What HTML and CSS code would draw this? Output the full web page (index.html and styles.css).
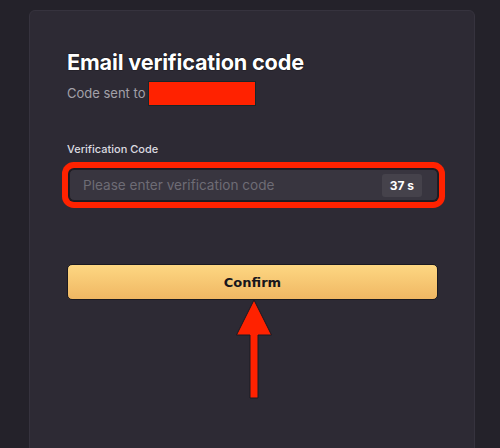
FILE: index.html
```html
<!DOCTYPE html>
<html>
<head>
<meta charset="utf-8">
<link rel="stylesheet" href="styles.css">
</head>
<body>
<div class="card">
  <h1 class="title">Email verification code</h1>
  <div class="sent">Code sent to <span class="redact"></span></div>
  <div class="label">Verification Code</div>
  <div class="field">
    <span class="placeholder">Please enter verification code</span>
    <span class="timer">37 s</span>
  </div>
  <button class="confirm">Confirm</button>
  <svg class="arrow" width="40" height="104" viewBox="0 0 40 104">
    <polygon points="18,0 0.5,35 14,35 14,98 22,98 22,35 35.5,35" fill="#ff2200" stroke="#1b1a22" stroke-width="1"/>
  </svg>
</div>
</body>
</html>
```
FILE: styles.css
```css
html, body { margin: 0; padding: 0; }
body {
  background: #24222a;
  width: 500px;
  height: 448px;
  overflow: hidden;
  font-family: Inter, "Liberation Sans", sans-serif;
}
.card {
  position: relative;
  box-sizing: border-box;
  margin: 10px 0 0 29px;
  width: 446px;
  height: 450px;
  background: #2d2a34;
  border: 1px solid #36333e;
  border-radius: 6px 6px 0 0;
  padding: 37px 37px 0 37px;
}
.title {
  margin: 0;
  font-size: 21.7px;
  font-weight: 700;
  color: #ffffff;
  line-height: 28px;
  letter-spacing: -0.2px;
  text-shadow: 0 0 1px #000, 0 0 1px #000;
}
.sent {
  margin-top: 5px;
  display: flex;
  align-items: center;
  font-size: 13px;
  color: #a3a1a9;
  height: 24px;
}
.redact {
  display: inline-block;
  width: 106px;
  height: 23px;
  margin-left: 4px;
  background: #ff2200;
  box-shadow: 0 0 0 1px #16262a;
}
.label {
  margin-top: 37px;
  font-size: 11px;
  font-weight: 500;
  color: #dcdbe0;
  line-height: 14px;
}
.field {
  margin: 13px 0 0 2px;
  width: 369px;
  height: 32px;
  box-sizing: border-box;
  background: #38353f;
  border: 1px solid #1f1d24;
  border-radius: 5px;
  box-shadow: 0 0 0 1px #1c1b21, 0 0 0 7px #ff2200;
  display: flex;
  align-items: center;
  justify-content: space-between;
  padding: 0 15px 0 13px;
}
.placeholder {
  font-size: 13.6px;
  color: #6e6c75;
}
.timer {
  background: #45424b;
  color: #ffffff;
  font-size: 12px;
  font-weight: 700;
  border-radius: 3px;
  padding: 4px 8px;
  line-height: 15px;
}
.confirm {
  display: block;
  margin-top: 63px;
  width: 371px;
  height: 36px;
  border: 1px solid #1a1920;
  border-radius: 5px;
  background: linear-gradient(#fdd782, #f0b763);
  font-family: "DejaVu Sans", Verdana, sans-serif;
  font-size: 13px;
  font-weight: 700;
  color: #17161c;
  padding: 0;
  cursor: pointer;
}
.arrow {
  position: absolute;
  left: 206px;
  top: 289px;
}
```
